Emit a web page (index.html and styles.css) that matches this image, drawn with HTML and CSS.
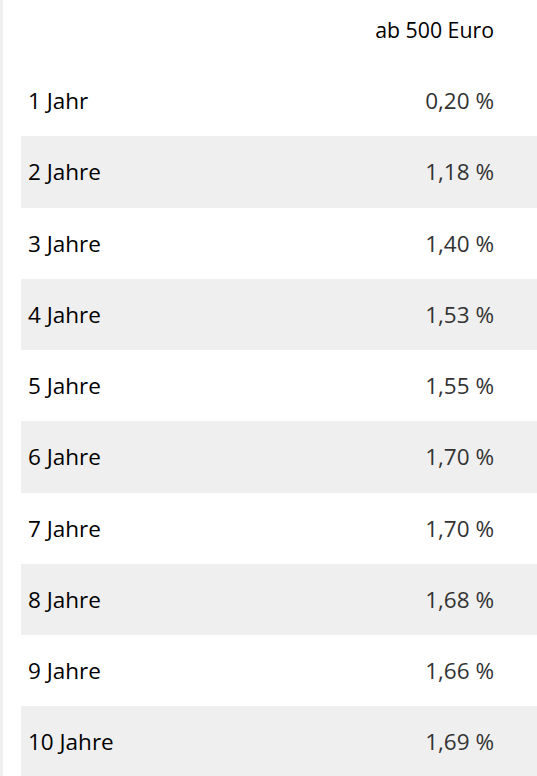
FILE: index.html
```html
<!DOCTYPE html>
<html lang="de">
<head>
<meta charset="utf-8">
<link rel="stylesheet" href="styles.css">
</head>
<body>
<div class="page">
  <table class="rates">
    <thead>
      <tr><th class="label"></th><th class="value">ab 500 Euro</th></tr>
    </thead>
    <tbody>
      <tr><td class="label">1 Jahr</td><td class="value">0,20 %</td></tr>
      <tr><td class="label">2 Jahre</td><td class="value">1,18 %</td></tr>
      <tr><td class="label">3 Jahre</td><td class="value">1,40 %</td></tr>
      <tr><td class="label">4 Jahre</td><td class="value">1,53 %</td></tr>
      <tr><td class="label">5 Jahre</td><td class="value">1,55 %</td></tr>
      <tr><td class="label">6 Jahre</td><td class="value">1,70 %</td></tr>
      <tr><td class="label">7 Jahre</td><td class="value">1,70 %</td></tr>
      <tr><td class="label">8 Jahre</td><td class="value">1,68 %</td></tr>
      <tr><td class="label">9 Jahre</td><td class="value">1,66 %</td></tr>
      <tr><td class="label">10 Jahre</td><td class="value">1,69 %</td></tr>
    </tbody>
  </table>
</div>
</body>
</html>
```
FILE: styles.css
```css
html, body {
  margin: 0;
  padding: 0;
  background: #fff;
}
.page {
  border-left: 3px solid #efefef;
  padding-left: 18px;
  min-height: 776px;
  box-sizing: border-box;
  font-family: "Open Sans", "Noto Sans", sans-serif;
  font-size: 22.5px;
}
.rates {
  width: 100%;
  border-collapse: collapse;
}
.rates th {
  height: 65px;
  font-size: 21.3px;
  font-weight: normal;
  color: #000;
  vertical-align: middle;
  padding: 0 0 6px 0;
  box-sizing: border-box;
}
.rates td {
  height: 71.25px;
  padding: 0;
  vertical-align: middle;
}
.rates .label {
  text-align: left;
  padding-left: 7px;
  color: #000;
}
.rates .value {
  text-align: right;
  padding-right: 43px;
}
.rates td.value {
  color: #333;
}
.rates tbody tr:nth-child(even) {
  background: #efefef;
}
```
